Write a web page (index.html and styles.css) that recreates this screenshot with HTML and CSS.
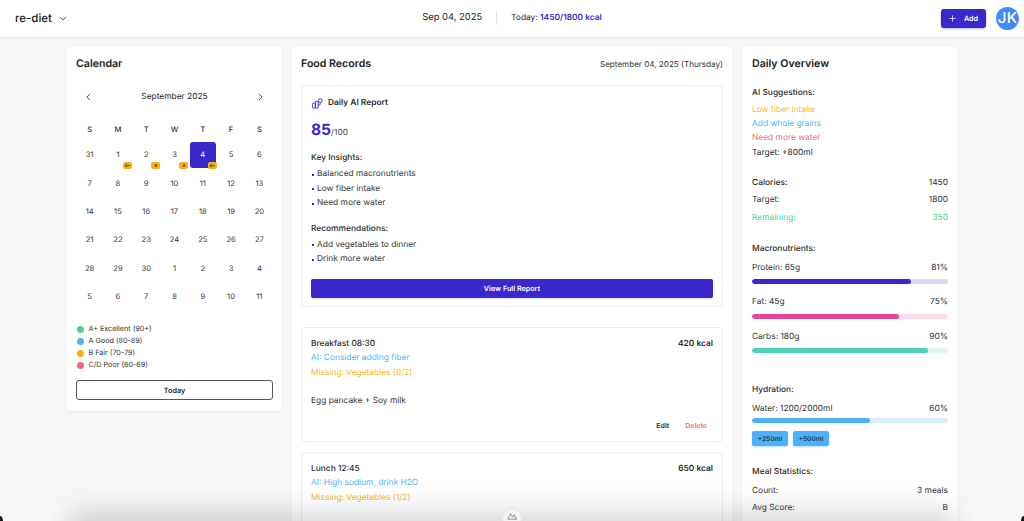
FILE: index.html
```html
<!DOCTYPE html>
<html lang="en">
<head>
<meta charset="utf-8">
<title>re-diet</title>
<link rel="stylesheet" href="styles.css">
</head>
<body>
<header class="topbar">
  <div class="brand"><span class="brand-name">re-diet</span>
    <svg class="chev" viewBox="0 0 10 6" width="8" height="5"><path d="M1 1l4 4 4-4" fill="none" stroke="#333" stroke-width="1"/></svg>
  </div>
  <div class="top-center">
    <span class="top-date">Sep 04, 2025</span>
    <span class="top-div"></span>
    <span class="top-today">Today: <b>1450/1800 kcal</b></span>
  </div>
  <div class="top-right">
    <button class="add-btn"><svg viewBox="0 0 10 10" width="7" height="7"><path d="M5 0.5v9M0.5 5h9" stroke="#fff" stroke-width="1"/></svg><span>Add</span></button>
    <div class="avatar">JK</div>
  </div>
</header>
<main class="layout">
  <section class="card cal">
    <h2 class="title">Calendar</h2>
    <div class="month-nav">
      <svg viewBox="0 0 6 10" width="5" height="8"><path d="M5 1L1 5l4 4" fill="none" stroke="#222" stroke-width="1"/></svg>
      <span>September 2025</span>
      <svg viewBox="0 0 6 10" width="5" height="8"><path d="M1 1l4 4-4 4" fill="none" stroke="#222" stroke-width="1"/></svg>
    </div>
    <div class="dow"><span>S</span><span>M</span><span>T</span><span>W</span><span>T</span><span>F</span><span>S</span></div>
    <div class="days">
      <div class="day">31</div><div class="day">1<i class="tag">A+</i></div><div class="day">2<i class="tag">B</i></div><div class="day">3<i class="tag">A</i></div><div class="day sel">4<i class="tag">A+</i></div><div class="day">5</div><div class="day">6</div>
      <div class="day">7</div><div class="day">8</div><div class="day">9</div><div class="day">10</div><div class="day">11</div><div class="day">12</div><div class="day">13</div>
      <div class="day">14</div><div class="day">15</div><div class="day">16</div><div class="day">17</div><div class="day">18</div><div class="day">19</div><div class="day">20</div>
      <div class="day">21</div><div class="day">22</div><div class="day">23</div><div class="day">24</div><div class="day">25</div><div class="day">26</div><div class="day">27</div>
      <div class="day">28</div><div class="day">29</div><div class="day">30</div><div class="day">1</div><div class="day">2</div><div class="day">3</div><div class="day">4</div>
      <div class="day">5</div><div class="day">6</div><div class="day">7</div><div class="day">8</div><div class="day">9</div><div class="day">10</div><div class="day">11</div>
    </div>
    <ul class="legend">
      <li><i class="dot green"></i>A+ Excellent (90+)</li>
      <li><i class="dot blue"></i>A Good (80-89)</li>
      <li><i class="dot amber"></i>B Fair (70-79)</li>
      <li><i class="dot red"></i>C/D Poor (60-69)</li>
    </ul>
    <button class="today-btn">Today</button>
  </section>

  <section class="card food">
    <div class="food-head"><h2 class="title">Food Records</h2><span class="food-date">September 04, 2025 (Thursday)</span></div>
    <div class="inner report">
      <div class="report-head">
        <svg viewBox="0 0 12 12" width="11" height="11"><g fill="none" stroke="#3b28cc" stroke-width="1"><rect x="0.7" y="5.5" width="3" height="5.5" rx=".5"/><path d="M3.7 4.2a.5.5 0 0 1 .5-.5h2a.5.5 0 0 1 .5.5v6.3a.5.5 0 0 1-.5.5H3.7z"/><circle cx="9" cy="2.8" r="2"/><path d="M6.7 7.5h1.6a.8.8 0 0 0 .7-.8V4.8"/></g></svg>
        <span>Daily AI Report</span>
      </div>
      <div class="score"><b>85</b>/100</div>
      <h3 class="sub">Key Insights:</h3>
      <ul class="bullets"><li>Balanced macronutrients</li><li>Low fiber intake</li><li>Need more water</li></ul>
      <h3 class="sub rec">Recommendations:</h3>
      <ul class="bullets"><li>Add vegetables to dinner</li><li>Drink more water</li></ul>
      <button class="report-btn">View Full Report</button>
    </div>
    <article class="inner meal">
      <div class="row strong"><span class="meal-name">Breakfast 08:30</span><span class="kcal">420 kcal</span></div>
      <p class="note c-blue">AI: Consider adding fiber</p>
      <p class="note c-amber">Missing: Vegetables (0/2)</p>
      <p class="foods">Egg pancake + Soy milk</p>
      <div class="actions"><span>Edit</span><span class="c-red">Delete</span></div>
    </article>
    <article class="inner meal">
      <div class="row strong"><span class="meal-name">Lunch 12:45</span><span class="kcal">650 kcal</span></div>
      <p class="note c-blue">AI: High sodium, drink H2O</p>
      <p class="note c-amber">Missing: Vegetables (1/2)</p>
    </article>
  </section>

  <section class="card over">
    <h2 class="title">Daily Overview</h2>
    <h3 class="sub first">AI Suggestions:</h3>
    <p class="sug c-amber">Low fiber intake</p>
    <p class="sug c-blue">Add whole grains</p>
    <p class="sug c-red">Need more water</p>
    <p class="sug">Target: +800ml</p>

    <div class="row stat head"><span class="sub-txt">Calories:</span><span>1450</span></div>
    <div class="row stat"><span>Target:</span><span>1800</span></div>
    <div class="row stat c-green"><span>Remaining:</span><span>350</span></div>

    <h3 class="sub macro">Macronutrients:</h3>
    <div class="row bar-label"><span>Protein: 65g</span><span>81%</span></div>
    <div class="track t-indigo"><div class="fill f-indigo" style="width:81%"></div></div>
    <div class="row bar-label"><span>Fat: 45g</span><span>75%</span></div>
    <div class="track t-pink"><div class="fill f-pink" style="width:75%"></div></div>
    <div class="row bar-label"><span>Carbs: 180g</span><span>90%</span></div>
    <div class="track t-teal"><div class="fill f-teal" style="width:90%"></div></div>

    <h3 class="sub hyd">Hydration:</h3>
    <div class="row water"><span>Water: 1200/2000ml</span><span>60%</span></div>
    <div class="track t-sky slim"><div class="fill f-sky" style="width:60%"></div></div>
    <div class="water-btns"><button>+250ml</button><button>+500ml</button></div>

    <h3 class="sub stats">Meal Statistics:</h3>
    <div class="row stat first-stat"><span>Count:</span><span>3 meals</span></div>
    <div class="row stat"><span>Avg Score:</span><span>B</span></div>
    <div class="row stat"><span>Best:</span><span>Lunch (A)</span></div>
  </section>
</main>
<div class="shade"></div>
<div class="dock"><svg viewBox="0 0 14 10" width="11" height="8"><path d="M1 9l3.5-7 2.5 4.5 2-3 3.5 5.5z" fill="none" stroke="#8a8a8a" stroke-width="1.2" stroke-linejoin="round"/></svg></div>
<div class="corner corner-l"></div>
<div class="corner corner-r"></div>
</body>
</html>
```
FILE: styles.css
```css
* { box-sizing: border-box; }
html, body { margin: 0; height: 521px; overflow: hidden; }
body { background: #f7f7f7; font-family: Inter, "Liberation Sans", sans-serif; font-size: 8.4px; line-height: 14px; color: #2b2b2b; text-rendering: geometricPrecision; }
h2, h3, p, ul { margin: 0; padding: 0; }
ul { list-style: none; }
button { font-family: inherit; cursor: pointer; text-rendering: geometricPrecision; }

.topbar { height: 37px; background: #fff; box-shadow: 0 1px 2px rgba(0,0,0,.08); display: grid; grid-template-columns: 1fr auto 1fr; align-items: center; padding: 0 15px 1px; }
.brand { display: flex; align-items: center; gap: 7px; }
.brand-name { font-size: 11.5px; font-weight: 500; color: #222; }
.top-center { display: flex; align-items: center; font-size: 9.4px; color: #222; }
.top-div { width: 1px; height: 14px; background: #e4e4e4; margin: 0 14px; }
.top-today { font-size: 8.4px; }
.top-today b { font-weight: 600; color: #3f2bc9; }
.top-right { display: flex; justify-content: flex-end; align-items: center; gap: 10px; margin-right: -10px; }
.add-btn { width: 45px; height: 19px; background: #3b28cc; color: #fff; border: 0; border-radius: 3px; box-shadow: 0 1px 2px rgba(59,40,204,.35); font-size: 7.2px; font-weight: 600; display: flex; align-items: center; justify-content: center; gap: 8px; padding: 0; }
.avatar { width: 23px; height: 23px; border-radius: 50%; background: #3f8ef5; color: #fff; font-size: 15px; font-weight: 500; display: flex; align-items: center; justify-content: center; letter-spacing: .2px; }

.layout { display: grid; grid-template-columns: 215px 440px 215px; gap: 10px; width: 890px; margin: 10px 0 0 67px; align-items: start; }
.card { background: #fff; border-radius: 4px; box-shadow: 0 1px 2px rgba(0,0,0,.05); padding: 9px; }
.title { font-size: 10.6px; line-height: 16px; font-weight: 600; color: #222; }

.cal { height: 364px; }
.month-nav { display: flex; justify-content: space-between; align-items: center; margin-top: 17px; padding: 0 10px; height: 16px; color: #222; }
.dow, .days { display: grid; grid-template-columns: repeat(7, 1fr); justify-items: center; margin-left: -.5px; margin-right: -.5px; }
.dow { margin-top: 18px; height: 14px; align-items: center; font-size: 7.6px; font-weight: 500; color: #333; }
.days { margin-top: 4px; grid-auto-rows: 28.4px; align-items: center; font-size: 7.6px; color: #333; }
.day { position: relative; width: 26px; height: 26px; display: flex; align-items: center; justify-content: center; border-radius: 3px; }
.day.sel { background: #3b28cc; color: #fff; }
.tag { position: absolute; right: -1px; bottom: -1px; min-width: 9px; height: 7px; padding: 0 1.5px; background: #f5b014; border-radius: 2px; font-style: normal; font-size: 4px; line-height: 7px; text-align: center; color: #4a3000; font-weight: 700; }
.legend { margin-top: 12px; }
.legend li { display: flex; align-items: center; gap: 5px; height: 12px; font-size: 7.2px; color: #333; }
.dot { width: 7px; height: 7px; border-radius: 50%; margin-left: .5px; }
.green { background: #4cd08f; } .blue { background: #4bb2fa; } .amber { background: #f5b014; } .red { background: #f5637f; }
.today-btn { display: block; width: 100%; height: 20px; margin-top: 9px; background: #fff; border: 1px solid #555; border-radius: 3px; font-size: 7.2px; font-weight: 600; color: #222; padding: 0; }

.food { height: 500px; }
.food-head { display: flex; justify-content: space-between; align-items: center; }
.food-date { font-size: 8.1px; color: #333; }
.inner { background: #fff; border: 1px solid #ececec; border-radius: 4px; }
.report { height: 222px; margin-top: 13px; padding: 10px 9px 0; }
.report-head { display: flex; align-items: center; gap: 5px; height: 14px; font-size: 8.4px; font-weight: 600; margin-left: 1px; color: #2b2b2b; }
.score { margin-top: 9px; height: 22px; font-size: 8.4px; display: flex; align-items: baseline; line-height: 22px; color: #444; }
.score b { font-size: 15.5px; font-weight: 700; color: #3b28cc; }
.sub { font-size: 8.4px; line-height: 14px; font-weight: 500; color: #2b2b2b; }
.report > .sub { margin-top: 10px; }
.report > .rec { margin-top: 11px; }
.bullets { margin-top: 2px; }
.bullets li { position: relative; padding-left: 6px; height: 14.5px; line-height: 14.5px; color: #333; }
.bullets li::before { content: ""; position: absolute; left: 1px; top: 6.5px; width: 2px; height: 2px; background: #3b28cc; }
.report-btn { display: block; width: 100%; height: 19px; margin-top: 12px; background: #3b28cc; color: #fff; border: 0; border-radius: 2px; font-size: 7.2px; font-weight: 600; box-shadow: 0 1px 2px rgba(0,0,0,.12); padding: 0; }
.meal { margin-top: 10px; padding: 9px 9px 0; height: 115px; }
.report + .meal { margin-top: 20px; }
.row { display: flex; justify-content: space-between; }
.strong { font-weight: 500; }
.kcal { font-weight: 600; }
.note { margin-top: .5px; line-height: 14.5px; }
.strong + .note { margin-top: -.5px; }
.c-blue { color: #4bb5fb; } .c-amber { color: #f7b924; } .c-red { color: #f56a82; } .c-green { color: #4cd08f; }
.foods { margin-top: 14px; color: #333; }
.actions { display: flex; justify-content: flex-end; gap: 16px; margin-top: 11px; padding-right: 6px; font-size: 7px; font-weight: 600; }

.over { height: 520px; padding-left: 10px; }
.first { margin-top: 14px; }
.sug { margin-top: .2px; line-height: 14px; }
.first + .sug { margin-top: 3px; }
.stat { line-height: 14px; margin-top: 3.4px; color: #333; }
.stat.c-green { color: #4cd08f; }
.stat.head { margin-top: 16.5px; color: #2b2b2b; }
.sub-txt { font-weight: 500; }
.macro { margin-top: 17px; }
.bar-label { margin-top: 5px; color: #333; }
.track + .bar-label { margin-top: 11px; }
.track { height: 5px; margin-top: 4.5px; border-radius: 3px; overflow: hidden; }
.fill { height: 100%; border-radius: 3px; }
.t-indigo { background: #dcd9f6; } .f-indigo { background: #3b28cc; }
.t-pink { background: #fbdcec; } .f-pink { background: #e5479b; }
.t-teal { background: #dff6f1; } .f-teal { background: #4fd1b8; }
.t-sky { background: #dbf0fe; } .f-sky { background: #4bb2fa; }
.hyd { margin-top: 30px; }
.water { margin-top: 5px; color: #333; }
.track.slim { margin-top: 2px; }
.water-btns { display: flex; gap: 5px; margin-top: 8px; }
.water-btns button { width: 36px; height: 15px; background: #4bb2fa; border: 0; border-radius: 2px; font-size: 6.6px; font-weight: 600; color: #1e3a55; padding: 0; box-shadow: 0 1px 2px rgba(75,178,250,.4); }
.stats { margin-top: 19px; }
.first-stat { margin-top: 4.5px; }

.shade { position: fixed; left: 70px; right: 70px; bottom: -22px; height: 30px; background: rgba(0,0,0,.18); filter: blur(14px); pointer-events: none; }
.dock { position: fixed; left: 502px; top: 508px; width: 20px; height: 20px; border-radius: 50%; background: #f3f3f3; border: 1px solid #e2e2e2; display: flex; align-items: flex-start; justify-content: center; padding-top: 3px; }
.corner { position: fixed; bottom: 0; width: 3px; height: 5px; background: #111; }
.corner-l { left: 0; border-top-right-radius: 100%; }
.corner-r { right: 0; border-top-left-radius: 100%; }
```
